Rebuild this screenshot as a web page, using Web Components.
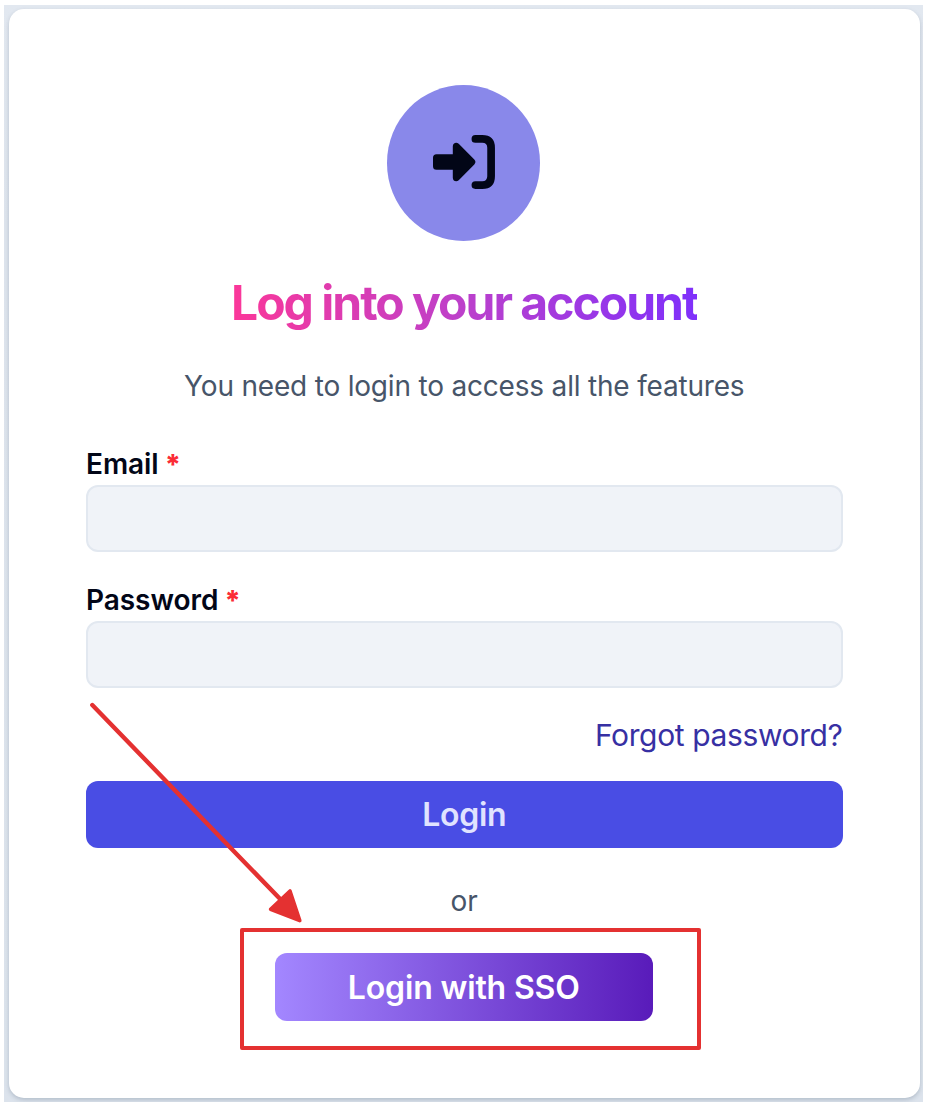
<!DOCTYPE html>
<html lang="en"><head><meta charset="utf-8"><title>Login</title>
<style>
html,body{margin:0;background:#fff;height:1108px;overflow:hidden}
body{font-family:Inter,"Liberation Sans",sans-serif;color:#020617}
</style></head><body>
<login-page></login-page>
<script>
const define=(name,html)=>{
  const t=document.createElement('template');t.innerHTML=html;
  customElements.define(name,class extends HTMLElement{
    constructor(){super();this.attachShadow({mode:'open'}).append(t.content.cloneNode(true));}
  });
};
define('login-badge',`<style>
:host{display:flex;width:153px;height:155.5px;border-radius:50%;background:#8988ea;align-items:center;justify-content:center;flex:none;margin-right:1px}
svg{display:block;margin:0 0 1.5px 1px}
</style><svg width="62" height="54" viewBox="0 0 62 54" fill="#020617"><path d="M3.5 19.3H19.8V11.3C19.8 8 23.4 6.6 25.7 8.7L41.3 24.6Q43.6 27 41.3 29.4L25.7 45.3C23.4 47.4 19.8 46 19.8 42.7V34.7H3.5Q0 34.7 0 31.2V22.8Q0 19.3 3.5 19.3Z"/><path d="M42.4 3.9H49.2Q58.1 3.9 58.1 12.8V41.2Q58.1 50.1 49.2 50.1H42.4" fill="none" stroke="#020617" stroke-width="7.7" stroke-linecap="round"/></svg>`);
define('gradient-title',`<style>
:host{display:block}
h1{margin:0;font-size:48px;line-height:58px;font-weight:750;letter-spacing:-2px;white-space:nowrap;background:linear-gradient(90deg,#fb3799,#bc40cb 50%,#7f30fb);-webkit-background-clip:text;background-clip:text;color:transparent}
</style><h1><slot></slot></h1>`);
define('form-field',`<style>
:host{display:block}
label{display:block;height:36px;line-height:38px;margin-bottom:3.5px;font-size:28px;font-weight:600;letter-spacing:-.05px;white-space:nowrap}
b{display:inline-block;line-height:1;color:#fb2c36;font-weight:800;letter-spacing:0;margin-left:-1px;transform:translateY(1px)}
div{box-sizing:border-box;height:67.5px;border:2px solid #e2e8f0;border-radius:12px;background:#f0f3f8}
</style><label><slot></slot> <b>*</b></label><div></div>`);
define('action-button',`<style>
:host{display:block}
button{display:block;box-sizing:border-box;width:100%;height:67.5px;padding:1.5px 0 0;border:0;border-radius:12px;background:var(--fill);color:var(--ink);font:600 32px/66px Inter,"Liberation Sans",sans-serif;letter-spacing:var(--track,0);white-space:nowrap}
</style><button><slot></slot></button>`);
define('red-arrow',`<style>:host{display:block;position:absolute;left:86px;top:700px;pointer-events:none}svg{display:block}</style>
<svg width="220" height="226" viewBox="86 700 220 226"><path d="M92.3 705L284 903" stroke="#e43131" stroke-width="4.4" stroke-linecap="round"/><path d="M290 891L299.8 920.6L270.6 909.2Z" fill="#e43131" stroke="#e43131" stroke-width="3.6" stroke-linejoin="round"/></svg>`);
define('login-page',`<style>
:host{display:block;box-sizing:border-box;width:928px;height:1108px;padding:5px 5px 6.5px 4px}
.back{box-sizing:border-box;height:1096.5px;padding:4px 3.5px 4px 5px;background:linear-gradient(#e2e8f0,#dee4ed 20%,#dce3ec);overflow:hidden}
.card{box-sizing:border-box;height:1088.5px;padding:76.3px 77px 0;border-radius:15px;background:#fff;box-shadow:0 2px 4px #64748b55;display:flex;flex-direction:column;align-items:center}
gradient-title{margin-top:33.2px}
p{margin:0;color:#475569;white-space:nowrap;font-size:28px;line-height:36px}
.sub{margin-top:36px;letter-spacing:-.19px}
form-field{align-self:stretch;margin-top:41.5px}
form-field+form-field{margin-top:29px}
a{align-self:flex-end;margin-top:27.5px;font-size:30px;line-height:38px;color:#3730a3;letter-spacing:-.38px;white-space:nowrap}
.main{align-self:stretch;margin-top:27px;--fill:#494de4;--ink:#e0e3ff;--track:-.35px}
.or{margin-top:34.5px}
.sso{box-sizing:border-box;width:460.5px;height:121.5px;margin-top:9.3px;border:4px solid #e43131;border-radius:2px;padding:21px 43.5px 0 30.5px;margin-left:12px}
.sso action-button{--fill:linear-gradient(90deg,#a387ff,#591bba);--ink:#fff;--track:-.16px}
</style><div class="back"><div class="card">
<login-badge></login-badge>
<gradient-title>Log into your account</gradient-title>
<p class="sub">You need to login to access all the features</p>
<form-field>Email</form-field><form-field>Password</form-field>
<a>Forgot password?</a>
<action-button class="main">Login</action-button>
<p class="or">or</p>
<div class="sso"><action-button>Login with SSO</action-button></div>
</div></div><red-arrow></red-arrow>`);
</script></body></html>
